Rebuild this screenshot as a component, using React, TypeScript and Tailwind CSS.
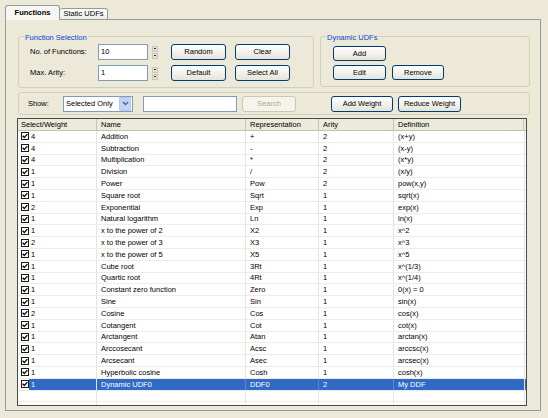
import React from "react";

const rows: [string, string, string, string, string][] = [
  ["4", "Addition", "+", "2", "(x+y)"],
  ["4", "Subtraction", "-", "2", "(x-y)"],
  ["4", "Multiplication", "*", "2", "(x*y)"],
  ["1", "Division", "/", "2", "(x/y)"],
  ["1", "Power", "Pow", "2", "pow(x,y)"],
  ["1", "Square root", "Sqrt", "1", "sqrt(x)"],
  ["2", "Exponential", "Exp", "1", "exp(x)"],
  ["1", "Natural logarithm", "Ln", "1", "ln(x)"],
  ["1", "x to the power of 2", "X2", "1", "x^2"],
  ["2", "x to the power of 3", "X3", "1", "x^3"],
  ["1", "x to the power of 5", "X5", "1", "x^5"],
  ["1", "Cube root", "3Rt", "1", "x^(1/3)"],
  ["1", "Quartic root", "4Rt", "1", "x^(1/4)"],
  ["1", "Constant zero function", "Zero", "1", "0(x) = 0"],
  ["1", "Sine", "Sin", "1", "sin(x)"],
  ["2", "Cosine", "Cos", "1", "cos(x)"],
  ["1", "Cotangent", "Cot", "1", "cot(x)"],
  ["1", "Arctangent", "Atan", "1", "arctan(x)"],
  ["1", "Arccosecant", "Acsc", "1", "arccsc(x)"],
  ["1", "Arcsecant", "Asec", "1", "arcsec(x)"],
  ["1", "Hyperbolic cosine", "Cosh", "1", "cosh(x)"],
  ["1", "Dynamic UDF0", "DDF0", "2", "My DDF"],
];

function Btn({ className, children, disabled }: { className: string; children: React.ReactNode; disabled?: boolean }) {
  return (
    <div
      className={
        "flex items-center justify-center rounded-[3px] border leading-none " +
        (disabled
          ? "border-[#c9c7ba] bg-[#f5f4ea] text-[#aca899] "
          : "border-[#003c74] bg-gradient-to-b from-white to-[#e6e4d8] text-black ") +
        className
      }
    >
      {children}
    </div>
  );
}

function Spinner() {
  return (
    <div className="ml-[4px] flex w-[6px] flex-col gap-[1px]">
      <div className="flex h-[6px] items-center justify-center border border-[#c9c7ba] bg-[#e3e1d4]">
        <div className="h-[1px] w-[2px] bg-[#333]" />
      </div>
      <div className="flex h-[6px] items-center justify-center border border-[#c9c7ba] bg-[#e3e1d4]">
        <div className="h-[1px] w-[2px] bg-[#333]" />
      </div>
    </div>
  );
}

function Check() {
  return (
    <div className="flex h-[8px] w-[8px] shrink-0 items-center justify-center border border-[#1a1a1a] bg-white">
      <svg width="6" height="6" viewBox="0 0 6 6">
        <path d="M0.6 2.8 L2.3 4.5 L5.4 1.1" stroke="#111" strokeWidth="1.4" fill="none" />
      </svg>
    </div>
  );
}

const cols = ["w-[79px]", "w-[149px]", "w-[73px]", "w-[75px]", "flex-1"];

export default function App() {
  return (
    <div
      className="flex h-[418px] w-[548px] flex-col overflow-hidden bg-[#ece9d8] pb-[7px] pl-[5px] pr-[7px] pt-[5px] text-[7.5px] text-black"
      style={{ fontFamily: "'Liberation Sans', Arial, sans-serif" }}
    >
      {/* tabs */}
      <div className="relative z-10 -mb-px flex h-[15px] items-end">
        <div className="flex h-[15px] w-[55px] items-center justify-center rounded-t-[3px] border border-b-0 border-[#919b9c] bg-[#f7f6f0] font-bold">
          Functions
        </div>
        <div className="flex h-[12px] w-[48px] items-center justify-center rounded-t-[3px] border border-l-0 border-[#919b9c] bg-gradient-to-b from-white to-[#ecebe5]">
          Static UDFs
        </div>
      </div>
      {/* panel */}
      <div className="flex flex-1 flex-col border border-[#919b9c] bg-[#ece9d8] pl-[11px] pt-[16px]">
        <div className="ml-[1px] flex gap-[6px]">
          {/* Function Selection */}
          <div className="relative h-[52px] w-[296px] rounded-[3px] border border-[#d0d0bf] pl-[11px] pt-[7px]">
            <div className="absolute -top-[5px] left-[5px] bg-[#ece9d8] px-[1px] text-[#0046d5]">Function Selection</div>
            <div className="flex flex-col gap-[5px]">
              <div className="flex h-[16px] items-center">
                <div className="w-[68px]">No. of Functions:</div>
                <div className="flex h-[16px] w-[50px] items-center border border-[#7f9db9] bg-white pl-[2px]">10</div>
                <Spinner />
                <Btn className="ml-[13px] h-[16px] w-[55px]">Random</Btn>
                <Btn className="ml-[9px] h-[16px] w-[55px]">Clear</Btn>
              </div>
              <div className="flex h-[16px] items-center">
                <div className="w-[68px]">Max. Arity:</div>
                <div className="flex h-[16px] w-[50px] items-center border border-[#7f9db9] bg-white pl-[2px]">1</div>
                <Spinner />
                <Btn className="ml-[13px] h-[16px] w-[55px]">Default</Btn>
                <Btn className="ml-[9px] h-[16px] w-[55px]">Select All</Btn>
              </div>
            </div>
          </div>
          {/* Dynamic UDFs */}
          <div className="relative h-[51px] w-[210px] rounded-[3px] border border-[#d0d0bf] pl-[12px] pt-[9px]">
            <div className="absolute -top-[5px] left-[5px] bg-[#ece9d8] px-[1px] text-[#0046d5]">Dynamic UDFs</div>
            <div className="flex flex-col gap-[4px]">
              <Btn className="h-[15px] w-[53px]">Add</Btn>
              <div className="flex gap-[6px]">
                <Btn className="h-[15px] w-[53px]">Edit</Btn>
                <Btn className="h-[15px] w-[52px]">Remove</Btn>
              </div>
            </div>
          </div>
        </div>
        {/* Show bar */}
        <div className="ml-[1px] mt-[4px] flex h-[23px] w-[512px] items-center rounded-[3px] border border-[#d0d0bf] pl-[9px]">
          <div className="w-[35px]">Show:</div>
          <div className="flex h-[16px] w-[70px] items-center border border-[#7f9db9] bg-white">
            <div className="flex-1 pl-[2px]">Selected Only</div>
            <div className="mr-[1px] flex h-[14px] w-[12px] items-center justify-center rounded-[1px] border border-[#b5c8f2] bg-[#c1d3fb]">
              <svg width="7" height="5" viewBox="0 0 7 5">
                <path d="M1 1 L3.5 3.5 L6 1" stroke="#4d6185" strokeWidth="1.3" fill="none" />
              </svg>
            </div>
          </div>
          <div className="ml-[10px] h-[16px] w-[94px] border border-[#7f9db9] bg-white" />
          <Btn disabled className="ml-[5px] h-[16px] w-[54px]">Search</Btn>
          <Btn className="ml-[35px] h-[16px] w-[62px]">Add Weight</Btn>
          <Btn className="ml-[5px] h-[16px] w-[63px]">Reduce Weight</Btn>
        </div>
        {/* table */}
        <div className="mt-[3px] flex h-[288px] w-[510px] flex-col border border-[#4a4a4a] bg-white">
          <div className="flex h-[12px] shrink-0 border-b border-[#c5c2b2] bg-[#ebeadb]">
            {["Select/Weight", "Name", "Representation", "Arity", "Definition"].map((h, i) => (
              <div
                key={h}
                className={cols[i] + " flex items-center border-r border-[#c7c5b2] " + (i === 0 ? "pl-[3px]" : "pl-[4px]")}
              >
                {h}
              </div>
            ))}
            <div className="w-[2px]" />
          </div>
          {rows.map((r, idx) => {
            const sel = idx === rows.length - 1;
            return (
              <div key={idx} className="flex h-[11.8px] shrink-0 border-b border-[#ececec]">
                <div className={cols[0] + " flex items-center border-r border-[#e4e4e4] pl-[3px]"}>
                  <Check />
                  <div className={"flex h-full flex-1 items-center pl-[2px] " + (sel ? "bg-[#316ac5] text-white" : "")}>{r[0]}</div>
                </div>
                {[1, 2, 3, 4].map((c) => (
                  <div
                    key={c}
                    className={
                      cols[c] +
                      " flex items-center pl-[4px] " +
                      (c < 4 ? "border-r " : "") +
                      (sel ? "border-[#5a86cf] bg-[#316ac5] text-white" : "border-[#e4e4e4]")
                    }
                  >
                    {r[c]}
                  </div>
                ))}
                <div className={"w-[2px] border-l border-[#e4e4e4] " + (sel ? "bg-[#316ac5]" : "")} />
              </div>
            );
          })}
          <div className="flex h-[11.8px] shrink-0 border-b border-[#ececec]">
            {cols.map((c, i) => (
              <div key={i} className={c + (i < 4 ? " border-r border-[#e4e4e4]" : "")} />
            ))}
            <div className="w-[2px] border-l border-[#e4e4e4]" />
          </div>
          <div className="flex flex-1">
            {cols.map((c, i) => (
              <div key={i} className={c + (i < 4 ? " border-r border-[#e4e4e4]" : "")} />
            ))}
            <div className="w-[2px] border-l border-[#e4e4e4]" />
          </div>
        </div>
      </div>
    </div>
  );
}
